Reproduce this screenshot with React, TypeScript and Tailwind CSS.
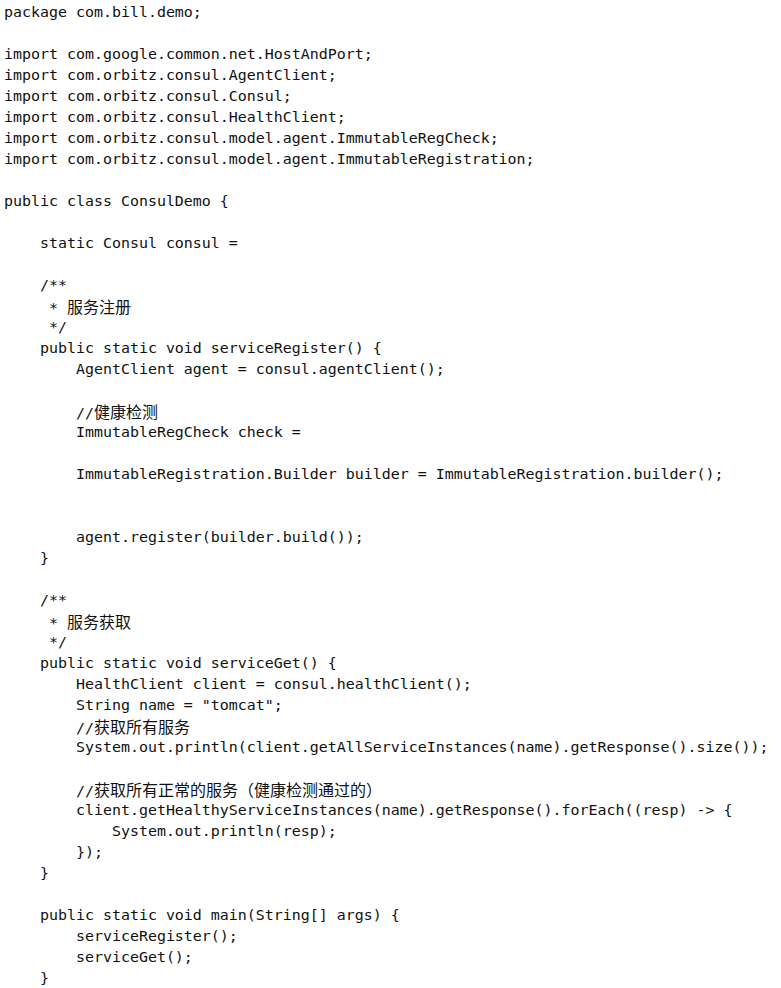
const lines: string[] = [
  'package com.bill.demo;',
  '',
  'import com.google.common.net.HostAndPort;',
  'import com.orbitz.consul.AgentClient;',
  'import com.orbitz.consul.Consul;',
  'import com.orbitz.consul.HealthClient;',
  'import com.orbitz.consul.model.agent.ImmutableRegCheck;',
  'import com.orbitz.consul.model.agent.ImmutableRegistration;',
  '',
  'public class ConsulDemo {',
  '',
  '    static Consul consul =',
  '',
  '    /**',
  '     * 服务注册',
  '     */',
  '    public static void serviceRegister() {',
  '        AgentClient agent = consul.agentClient();',
  '',
  '        //健康检测',
  '        ImmutableRegCheck check =',
  '',
  '        ImmutableRegistration.Builder builder = ImmutableRegistration.builder();',
  '',
  '',
  '        agent.register(builder.build());',
  '    }',
  '',
  '    /**',
  '     * 服务获取',
  '     */',
  '    public static void serviceGet() {',
  '        HealthClient client = consul.healthClient();',
  '        String name = "tomcat";',
  '        //获取所有服务',
  '        System.out.println(client.getAllServiceInstances(name).getResponse().size());',
  '',
  '        //获取所有正常的服务（健康检测通过的）',
  '        client.getHealthyServiceInstances(name).getResponse().forEach((resp) -> {',
  '            System.out.println(resp);',
  '        });',
  '    }',
  '',
  '    public static void main(String[] args) {',
  '        serviceRegister();',
  '        serviceGet();',
  '    }',
];

// split a line into ascii and CJK runs so the CJK can be a bit larger
const renderLine = (text: string) => {
  const parts = text.split(/([\u3000-\u9fff\uff00-\uffef]+)/);
  return parts.map((p, i) =>
    i % 2 === 1 ? (
      <span key={i} className="text-[16px] font-['Noto_Sans_CJK_SC',sans-serif]">
        {p}
      </span>
    ) : (
      <span key={i}>{p}</span>
    )
  );
};

const App = () => {
  return (
    <div className="w-[781px] h-[988px] bg-white overflow-hidden pt-[2px] pl-[4px]">
      <div className="font-['DejaVu_Sans_Mono','Noto_Sans_CJK_SC',monospace] text-[14.95px] text-[#111] whitespace-pre">
        {lines.map((line, i) => (
          <div key={i} className="h-[21px] leading-[21px]">
            {line === '' ? ' ' : renderLine(line)}
          </div>
        ))}
      </div>
    </div>
  );
};

export default App;
